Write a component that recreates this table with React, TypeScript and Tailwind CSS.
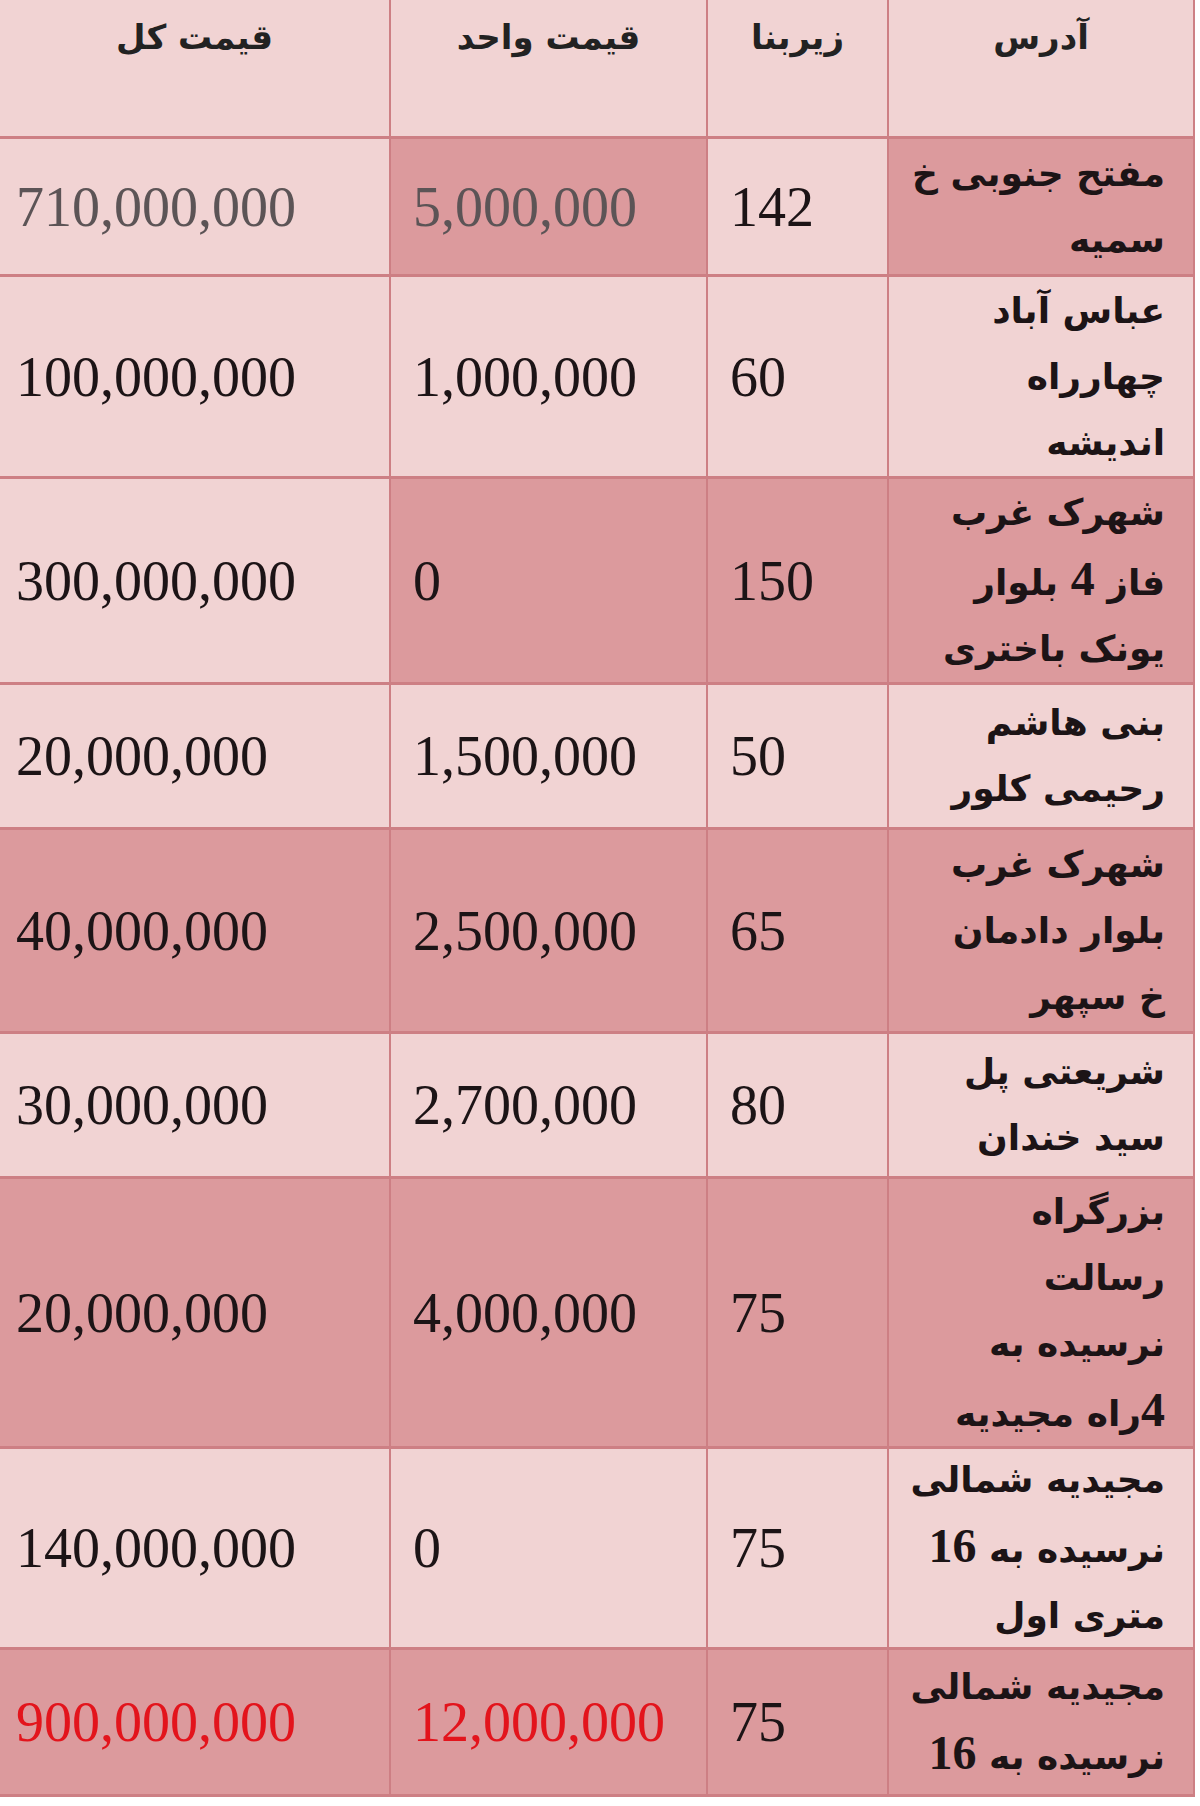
const rows = [
  { total: "710,000,000", unit: "5,000,000", area: "142", addr: ["مفتح جنوبی خ", "سمیه"], h: "h-[135px]", shade: [false, true, false, true], tone: "gray" },
  { total: "100,000,000", unit: "1,000,000", area: "60", addr: ["عباس آباد", "چهارراه", "اندیشه"], h: "h-[199px]", shade: [false, false, false, false], tone: "dark" },
  { total: "300,000,000", unit: "0", area: "150", addr: ["شهرک غرب", "فاز 4 بلوار", "یونک باختری"], h: "h-[203px]", shade: [false, true, true, true], tone: "dark" },
  { total: "20,000,000", unit: "1,500,000", area: "50", addr: ["بنی هاشم", "رحیمی کلور"], h: "h-[142px]", shade: [false, false, false, false], tone: "dark" },
  { total: "40,000,000", unit: "2,500,000", area: "65", addr: ["شهرک غرب", "بلوار دادمان", "خ سپهر"], h: "h-[201px]", shade: [true, true, true, true], tone: "dark" },
  { total: "30,000,000", unit: "2,700,000", area: "80", addr: ["شریعتی پل", "سید خندان"], h: "h-[142px]", shade: [false, false, false, false], tone: "dark" },
  { total: "20,000,000", unit: "4,000,000", area: "75", addr: ["بزرگراه", "رسالت", "نرسیده به", "4راه مجیدیه"], h: "h-[267px]", shade: [true, true, true, true], tone: "dark" },
  { total: "140,000,000", unit: "0", area: "75", addr: ["مجیدیه شمالی", "نرسیده به 16", "متری اول"], h: "h-[198px]", shade: [false, false, false, false], tone: "dark" },
  { total: "900,000,000", unit: "12,000,000", area: "75", addr: ["مجیدیه شمالی", "نرسیده به 16"], h: "h-[144px]", shade: [true, true, true, true], tone: "red" },
];

const serif = "font-['Liberation_Serif','DejaVu_Sans',serif]";
const arabic = "font-['DejaVu_Sans',sans-serif]";

function bg(dark: boolean) {
  return dark ? "bg-[#dc9a9d]" : "bg-[#f1d3d3]";
}

// digits inside the address use the bigger serif face, like the source sheet
function AddrLine({ text }: { text: string }) {
  const parts = text.split(/(\d+)/);
  return (
    <span className="whitespace-nowrap">
      {parts.map((p, i) =>
        /^\d+$/.test(p) ? (
          <span key={i} className={`${serif} text-[48px] font-bold`}>
            {p}
          </span>
        ) : (
          <span key={i}>{p}</span>
        )
      )}
    </span>
  );
}

export default function App() {
  return (
    <div className="min-h-[1806px] bg-white">
      <div className="grid w-[1195px] grid-cols-[389px_315px_179px_304px] gap-x-[2px] gap-y-[3px] bg-[#cd7f84] pr-[2px] pb-[3px]">
        {/* header */}
        <div className={`h-[136px] ${bg(false)} pt-[12px] text-center text-[34px] font-bold text-[#222] ${arabic}`} dir="rtl">
          قیمت کل
        </div>
        <div className={`h-[136px] ${bg(false)} pt-[12px] text-center text-[34px] font-bold text-[#222] ${arabic}`} dir="rtl">
          قیمت واحد
        </div>
        <div className={`h-[136px] ${bg(false)} pt-[12px] text-center text-[34px] font-bold text-[#222] ${arabic}`} dir="rtl">
          زیربنا
        </div>
        <div className={`h-[136px] ${bg(false)} pt-[12px] text-center text-[34px] font-bold text-[#222] ${arabic}`} dir="rtl">
          آدرس
        </div>

        {rows.map((r, i) => {
          const numColor =
            r.tone === "gray" ? "text-[#5c5456]" : r.tone === "red" ? "text-[#e3141c]" : "text-[#1c1416]";
          return [
            <div key={`t${i}`} className={`${r.h} ${bg(r.shade[0])} flex items-center pl-[16px] text-[56px] ${numColor} ${serif}`}>
              {r.total}
            </div>,
            <div key={`u${i}`} className={`${r.h} ${bg(r.shade[1])} flex items-center pl-[22px] text-[56px] ${numColor} ${serif}`}>
              {r.unit}
            </div>,
            <div key={`a${i}`} className={`${r.h} ${bg(r.shade[2])} flex items-center pl-[22px] text-[56px] text-[#1c1416] ${serif}`}>
              {r.area}
            </div>,
            <div
              key={`d${i}`}
              dir="rtl"
              className={`${r.h} ${bg(r.shade[3])} flex flex-col justify-center pr-[28px] text-[36px] font-bold leading-[66px] text-[#1c1416] ${arabic}`}
            >
              {r.addr.map((line) => (
                <AddrLine key={line} text={line} />
              ))}
            </div>,
          ];
        })}
      </div>
    </div>
  );
}
